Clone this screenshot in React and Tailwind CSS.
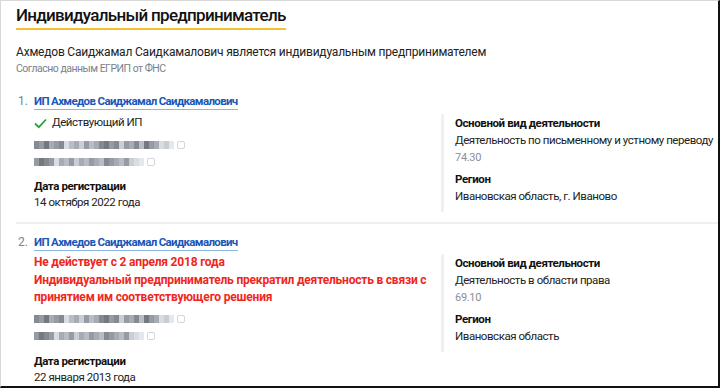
import React from "react";

const font = { fontFamily: "Roboto, 'Noto Sans', sans-serif" };

// mosaic stand-ins for the blurred requisites
const row1 = [7, 6, 8, 5, 6, 7, 2, 4, 5, 3, 6, 4, 5, 7, 8, 6, 7, 3, 6, 5, 7, 4, 8, 6, 5, 2, 3, 1];
const row2 = [6, 8, 7, 6, 2, 5, 4, 6, 3, 5, 4, 6, 5, 4, 7, 6, 5, 4, 6, 3, 2, 1];
const shades = ["#f4f5f7", "#e6e8ec", "#d9dce2", "#c9cdd4", "#b8bcc4", "#a7abb3", "#969aa2", "#858990", "#74787f"];

const label = "font-bold text-[11.5px] tracking-[-0.4px] text-[#111]";
const body = "text-[11.5px] tracking-[-0.45px] text-[#222]";

function Mosaic({ cells, icon }) {
  return (
    <div className="flex items-center h-[17px]">
      {cells.map((c, i) => (
        <div key={i} className="w-[5px] h-[8px]" style={{ background: shades[c] }} />
      ))}
      {icon && <div className="ml-[3px] w-[8px] h-[8px] border border-[#cfd6e2] rounded-[2px]" />}
    </div>
  );
}

function Right({ activity, code, region }) {
  return (
    <div className="w-[277px] border-l-[3px] border-[#eef0f4] pl-[11px] pt-[1px] pb-[7px] whitespace-nowrap leading-[17px]">
      <p className={label}>Основной вид деятельности</p>
      <p className={body}>{activity}</p>
      <p className="text-[11px] tracking-[-0.3px] text-[#8a8f98]">{code}</p>
      <p className={`${label} mt-[5px]`}>Регион</p>
      <p className={body}>{region}</p>
    </div>
  );
}

function Entry({ n, status, date, right, top, rows }) {
  return (
    <div className="flex">
      <div className="flex-1">
        <div className="flex items-baseline h-[18px]">
          <span className="w-[16px] text-[12px] text-[#7a8290]">{n}.</span>
          <a className="text-[11.5px] font-bold tracking-[-0.65px] text-[#1a56b8] border-b-[1.5px] border-[#8ab6ea] leading-[15px]">
            ИП Ахмедов Саиджамал Саидкамалович
          </a>
        </div>
        <div className="pl-[16px]">
          <div className={top}>{status}</div>
          <div className={rows}>
            <Mosaic cells={row1} icon />
            <Mosaic cells={row2} icon />
          </div>
          <p className={`${label} leading-[16px] mt-[8px]`}>Дата регистрации</p>
          <p className={`${body} leading-[16px]`}>{date}</p>
        </div>
      </div>
      {right}
    </div>
  );
}

export default function App() {
  return (
    <div className="w-[720px] h-[388px] overflow-hidden bg-white border-l border-t border-[#d8d8d8] border-r-2 border-b-2 border-r-[#111] border-b-[#111]" style={font}>
      <div className="pl-[15px] pt-[2px]">
        <h1 className="inline-block text-[17px] font-medium tracking-[-0.7px] text-[#111] leading-[24px] pb-[1px] border-b-2 border-[#f2c230]">
          Индивидуальный предприниматель
        </h1>
        <p className="mt-[14px] leading-[17px] text-[12px] tracking-[-0.2px] text-[#222]">
          Ахмедов Саиджамал Саидкамалович является индивидуальным предпринимателем
        </p>
        <p className="text-[10.5px] tracking-[-0.5px] leading-[16px] text-[#7b818b]">Согласно данным ЕГРИП от ФНС</p>

        <div className="mt-[15px] pl-[2px]">
          <Entry
            n={1}
            top="mt-[4px]"
            rows="mt-[4px]"
            status={
              <div className="flex items-center gap-[5px] h-[18px]">
                <svg width="13" height="11" viewBox="0 0 13 11" fill="none">
                  <path d="M1 5.5 L4.8 9.2 L12 1.5" stroke="#2ea043" strokeWidth="1.8" />
                </svg>
                <span className={body}>Действующий ИП</span>
              </div>
            }
            date="14 октября 2022 года"
            right={
              <div className="pt-[22px]">
                <Right activity="Деятельность по письменному и устному переводу" code="74.30" region="Ивановская область, г. Иваново" />
              </div>
            }
          />
        </div>
        <div className="h-[2px] bg-[#eeeef4] mt-[10px]" />
        <div className="mt-[9px] pl-[2px]">
          <Entry
            n={2}
            top="mt-[3px]"
            rows="mt-[4px]"
            status={
              <div className="text-[12px] font-bold tracking-[-0.2px] text-[#f0261d] leading-[17.5px]">
                <p>Не действует с 2 апреля 2018 года</p>
                <p>Индивидуальный предприниматель прекратил деятельность в связи с</p>
                <p>принятием им соответствующего решения</p>
              </div>
            }
            date="22 января 2013 года"
            right={
              <div className="pt-[21px]">
                <Right activity="Деятельность в области права" code="69.10" region="Ивановская область" />
              </div>
            }
          />
        </div>
      </div>
    </div>
  );
}
